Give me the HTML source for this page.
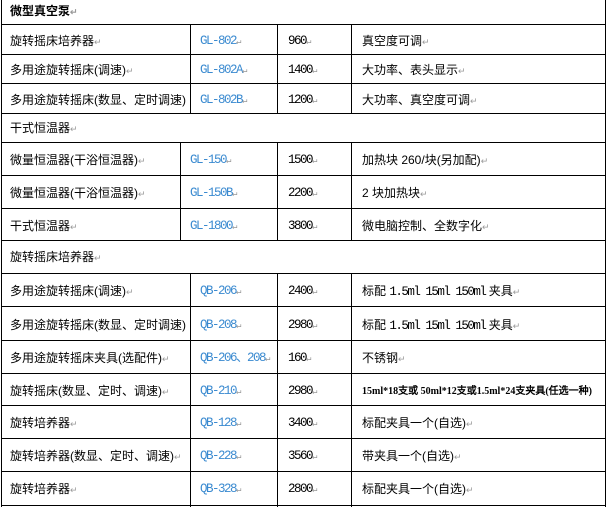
<!DOCTYPE html>
<html><head><meta charset="utf-8"><style>
body{margin:0;width:606px;height:507px;background:#fff;position:relative;overflow:hidden;font-family:"Liberation Sans","WenQuanYi Zen Hei","Noto Sans CJK SC",sans-serif;font-size:12px;color:#000}
.h{position:absolute;height:1px;background:#000;left:1px;width:605px}
.v{position:absolute;width:1px;background:#000}
.t{position:absolute;white-space:nowrap;line-height:14px}
.b{color:#3a8ad0;font-family:"Liberation Mono",monospace;font-size:12.5px;letter-spacing:-1.5px}
.n{font-family:"Liberation Mono",monospace;font-size:12.5px;letter-spacing:-1.5px}
.r{color:#999;font-size:9px;letter-spacing:0}
</style></head><body>
<div class="v" style="left:1px;top:0;height:507px"></div>
<div class="v" style="left:605px;top:0;height:507px"></div>
<div class="h" style="top:24px"></div><div class="h" style="top:54px"></div><div class="h" style="top:83px"></div><div class="h" style="top:113px"></div><div class="h" style="top:142px"></div><div class="h" style="top:175px"></div><div class="h" style="top:208px"></div><div class="h" style="top:240px"></div><div class="h" style="top:273px"></div><div class="h" style="top:306px"></div><div class="h" style="top:340px"></div><div class="h" style="top:373px"></div><div class="h" style="top:405px"></div><div class="h" style="top:438px"></div><div class="h" style="top:471px"></div><div class="h" style="top:505px"></div>
<div class="v" style="left:190px;top:24px;height:89px"></div><div class="v" style="left:277px;top:24px;height:89px"></div><div class="v" style="left:351px;top:24px;height:89px"></div>
<div class="v" style="left:180px;top:142px;height:98px"></div><div class="v" style="left:277px;top:142px;height:98px"></div><div class="v" style="left:351px;top:142px;height:98px"></div>
<div class="v" style="left:190px;top:273px;height:234px"></div><div class="v" style="left:277px;top:273px;height:234px"></div><div class="v" style="left:351px;top:273px;height:234px"></div>

<div class="t" style="left:10px;top:4px;font-weight:bold">微型真空泵<span class="r">↵</span></div>
<div class="t" style="left:10px;top:34px">旋转摇床培养器<span class="r">↵</span></div>
<div class="t b" style="left:200px;top:34px">GL-802<span class="r">↵</span></div>
<div class="t n" style="left:288px;top:34px">960<span class="r">↵</span></div>
<div class="t" style="left:362px;top:34px">真空度可调<span class="r">↵</span></div>
<div class="t" style="left:10px;top:63px">多用途旋转摇床(调速)<span class="r">↵</span></div>
<div class="t b" style="left:200px;top:63px">GL-802A<span class="r">↵</span></div>
<div class="t n" style="left:288px;top:63px">1400<span class="r">↵</span></div>
<div class="t" style="left:362px;top:63px">大功率、表头显示<span class="r">↵</span></div>
<div class="t" style="left:10px;top:93px">多用途旋转摇床(数显、定时调速)</div>
<div class="t b" style="left:200px;top:93px">GL-802B<span class="r">↵</span></div>
<div class="t n" style="left:288px;top:93px">1200<span class="r">↵</span></div>
<div class="t" style="left:362px;top:93px">大功率、真空度可调<span class="r">↵</span></div>
<div class="t" style="left:10px;top:121px">干式恒温器<span class="r">↵</span></div>
<div class="t" style="left:10px;top:153px">微量恒温器(干浴恒温器)<span class="r">↵</span></div>
<div class="t b" style="left:190px;top:153px">GL-150<span class="r">↵</span></div>
<div class="t n" style="left:288px;top:153px">1500<span class="r">↵</span></div>
<div class="t" style="left:362px;top:153px">加热块 260/块(另加配)<span class="r">↵</span></div>
<div class="t" style="left:10px;top:186px">微量恒温器(干浴恒温器)<span class="r">↵</span></div>
<div class="t b" style="left:190px;top:186px">GL-150B<span class="r">↵</span></div>
<div class="t n" style="left:288px;top:186px">2200<span class="r">↵</span></div>
<div class="t" style="left:362px;top:186px">2 块加热块<span class="r">↵</span></div>
<div class="t" style="left:10px;top:219px">干式恒温器<span class="r">↵</span></div>
<div class="t b" style="left:190px;top:219px">GL-1800<span class="r">↵</span></div>
<div class="t n" style="left:288px;top:219px">3800<span class="r">↵</span></div>
<div class="t" style="left:362px;top:219px">微电脑控制、全数字化<span class="r">↵</span></div>
<div class="t" style="left:10px;top:250px">旋转摇床培养器<span class="r">↵</span></div>
<div class="t" style="left:10px;top:284px">多用途旋转摇床(调速)<span class="r">↵</span></div>
<div class="t b" style="left:200px;top:284px">QB-206<span class="r">↵</span></div>
<div class="t n" style="left:288px;top:284px">2400<span class="r">↵</span></div>
<div class="t" style="left:362px;top:284px">标配 <span class="n">1.5ml 15ml 150ml</span> 夹具<span class="r">↵</span></div>
<div class="t" style="left:10px;top:318px">多用途旋转摇床(数显、定时调速)</div>
<div class="t b" style="left:200px;top:318px">QB-208<span class="r">↵</span></div>
<div class="t n" style="left:288px;top:318px">2980<span class="r">↵</span></div>
<div class="t" style="left:362px;top:318px">标配 <span class="n">1.5ml 15ml 150ml</span> 夹具<span class="r">↵</span></div>
<div class="t" style="left:10px;top:351px">多用途旋转摇床夹具(选配件)<span class="r">↵</span></div>
<div class="t b" style="left:200px;top:351px">QB-206、208<span class="r">↵</span></div>
<div class="t n" style="left:288px;top:351px">160<span class="r">↵</span></div>
<div class="t" style="left:362px;top:351px">不锈钢<span class="r">↵</span></div>
<div class="t" style="left:10px;top:384px">旋转摇床(数显、定时、调速)<span class="r">↵</span></div>
<div class="t b" style="left:200px;top:384px">QB-210<span class="r">↵</span></div>
<div class="t n" style="left:288px;top:384px">2980<span class="r">↵</span></div>
<div class="t" style="left:362px;top:385px;font-size:10px;font-weight:bold;font-family:'Liberation Serif','WenQuanYi Zen Hei',serif">15ml*18支或 50ml*12支或1.5ml*24支夹具(任选一种)</div>
<div class="t" style="left:10px;top:416px">旋转培养器<span class="r">↵</span></div>
<div class="t b" style="left:200px;top:416px">QB-128<span class="r">↵</span></div>
<div class="t n" style="left:288px;top:416px">3400<span class="r">↵</span></div>
<div class="t" style="left:362px;top:416px">标配夹具一个(自选)<span class="r">↵</span></div>
<div class="t" style="left:10px;top:449px">旋转培养器(数显、定时、调速)<span class="r">↵</span></div>
<div class="t b" style="left:200px;top:449px">QB-228<span class="r">↵</span></div>
<div class="t n" style="left:288px;top:449px">3560<span class="r">↵</span></div>
<div class="t" style="left:362px;top:449px">带夹具一个(自选)<span class="r">↵</span></div>
<div class="t" style="left:10px;top:482px">旋转培养器<span class="r">↵</span></div>
<div class="t b" style="left:200px;top:482px">QB-328<span class="r">↵</span></div>
<div class="t n" style="left:288px;top:482px">2800<span class="r">↵</span></div>
<div class="t" style="left:362px;top:482px">标配夹具一个(自选)<span class="r">↵</span></div>
</body></html>
